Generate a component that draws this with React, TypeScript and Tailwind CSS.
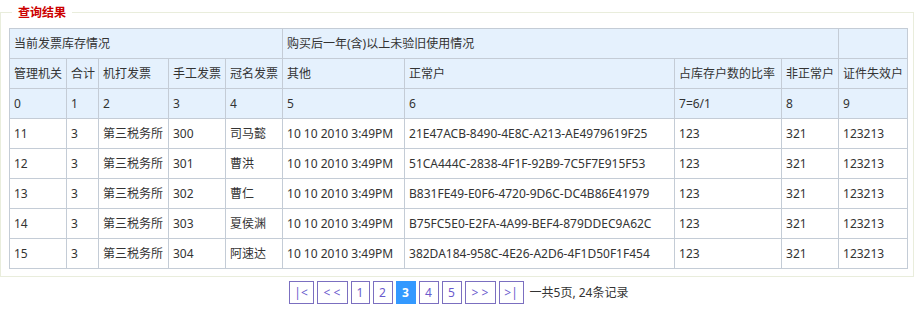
import React from "react";

const font = { fontFamily: '"Noto Sans", "Noto Sans CJK SC", sans-serif' };

const rows = [
  ["11", "3", "第三税务所", "300", "司马懿", "10 10 2010 3:49PM", "21E47ACB-8490-4E8C-A213-AE4979619F25", "123", "321", "123213"],
  ["12", "3", "第三税务所", "301", "曹洪", "10 10 2010 3:49PM", "51CA444C-2838-4F1F-92B9-7C5F7E915F53", "123", "321", "123213"],
  ["13", "3", "第三税务所", "302", "曹仁", "10 10 2010 3:49PM", "B831FE49-E0F6-4720-9D6C-DC4B86E41979", "123", "321", "123213"],
  ["14", "3", "第三税务所", "303", "夏侯渊", "10 10 2010 3:49PM", "B75FC5E0-E2FA-4A99-BEF4-879DDEC9A62C", "123", "321", "123213"],
  ["15", "3", "第三税务所", "304", "阿速达", "10 10 2010 3:49PM", "382DA184-958C-4E26-A2D6-4F1D50F1F454", "123", "321", "123213"],
];

const widths = [57, 32, 70, 57, 57, 122, 270, 107, 57, 69];

const h2 = ["管理机关", "合计", "机打发票", "手工发票", "冠名发票", "其他", "正常户", "占库存户数的比率", "非正常户", "证件失效户"];
const h3 = ["0", "1", "2", "3", "4", "5", "6", "7=6/1", "8", "9"];

const th = "h-[30px] border border-[#c4ccd6] bg-[#e5f1fd] px-[4px] text-left font-normal whitespace-nowrap";
const td = "h-[30px] border border-[#c4ccd6] bg-white px-[4px] text-left whitespace-nowrap";

const pages: { label: string; w: string; active?: boolean }[] = [
  { label: "|<", w: "w-[25px]" },
  { label: "< <", w: "w-[31px]" },
  { label: "1", w: "w-[19px]" },
  { label: "2", w: "w-[20px]" },
  { label: "3", w: "w-[20px]", active: true },
  { label: "4", w: "w-[20px]" },
  { label: "5", w: "w-[20px]" },
  { label: "> >", w: "w-[31px]" },
  { label: ">|", w: "w-[25px]" },
];

export default function App() {
  return (
    <div className="w-[917px] h-[315px] bg-white text-[12px] text-[#333]" style={font}>
      <fieldset className="w-[914px] border border-[#e9eddc] pl-[8px] pt-[4px] pb-[7px]">
        <legend className="ml-[3px] px-[6px] h-[24px] leading-[25px] text-[12px] font-bold text-[#cc0000]">查询结果</legend>
        <table className="w-[898px] table-fixed border-collapse">
          <colgroup>
            {widths.map((w, i) => (
              <col key={i} style={{ width: w }} />
            ))}
          </colgroup>
          <thead>
            <tr>
              <th className={th} colSpan={5}>当前发票库存情况</th>
              <th className={th} colSpan={4}>购买后一年(含)以上未验旧使用情况</th>
              <th className={th}></th>
            </tr>
            <tr>
              {h2.map((t, i) => (
                <th key={i} className={th}>{t}</th>
              ))}
            </tr>
            <tr>
              {h3.map((t, i) => (
                <th key={i} className={th}>{t}</th>
              ))}
            </tr>
          </thead>
          <tbody>
            {rows.map((r, i) => (
              <tr key={i}>
                {r.map((c, j) => (
                  <td key={j} className={td}>{c}</td>
                ))}
              </tr>
            ))}
          </tbody>
        </table>
      </fieldset>
      <div className="mt-[4px] flex justify-center items-center gap-[3px]">
        {pages.map((p, i) => (
          <span
            key={i}
            className={
              "h-[23px] flex items-center justify-center border " +
              p.w +
              (p.active
                ? " bg-[#3399ff] border-[#3399ff] text-white font-bold"
                : " border-[#7b6fc0] text-[#6a5acd]")
            }
          >
            {p.label}
          </span>
        ))}
        <span className="ml-[3px] text-[#333]">一共5页, 24条记录</span>
      </div>
    </div>
  );
}
